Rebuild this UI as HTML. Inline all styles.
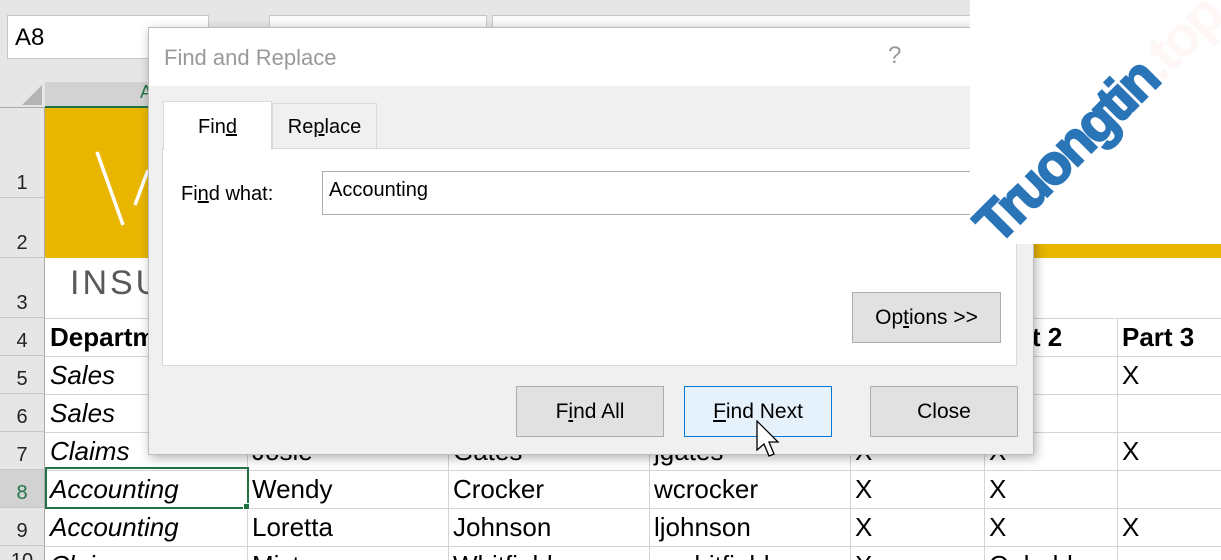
<!DOCTYPE html>
<html><head><meta charset="utf-8"><style>
*{margin:0;padding:0;box-sizing:border-box}
html,body{width:1221px;height:560px;overflow:hidden}
body{background:#fff;position:relative;font-family:"Liberation Sans",sans-serif;color:#000}
.a{position:absolute}
.rh{position:absolute;left:0;width:45px;background:#e6e6e6;border-bottom:1px solid #c6c6c6;border-right:1px solid #ababab;font-size:20px;color:#222;text-align:center}
.rh span{position:absolute;bottom:2px;left:0;right:0}
.vl{position:absolute;top:318px;bottom:0;width:1px;background:#d4d4d4}
.hl{position:absolute;left:45px;right:0;height:1px;background:#d4d4d4}
.c{position:absolute;font-size:26px;white-space:nowrap}
.i{font-style:italic}
.btn{position:absolute;top:386px;height:51px;width:148px;background:#e1e1e1;border:1px solid #adadad;font-size:21px;text-align:center;line-height:49px}
u{text-decoration:underline}
</style></head><body>
<div class="a" style="left:0;top:0;width:1221px;height:82px;background:#e6e6e6"></div>
<div class="a" style="left:7px;top:15px;width:202px;height:44px;background:#fff;border:1px solid #c6c6c6;font-size:24px;padding:8px 0 0 7px">A8</div>
<div class="a" style="left:269px;top:15px;width:218px;height:14px;background:#fafafa;border:1px solid #c6c6c6"></div>
<div class="a" style="left:492px;top:15px;width:480px;height:14px;background:#fafafa;border:1px solid #c6c6c6"></div>
<div class="a" style="left:0;top:82px;width:1221px;height:26px;background:#e6e6e6;border-bottom:1px solid #ababab"></div>
<div class="a" style="left:45px;top:82px;width:202px;height:26px;background:#d2d2d2;border-bottom:2px solid #217346;text-align:center;font-size:18px;color:#217346">A</div>
<div class="a" style="left:22px;top:85px;width:0;height:0;border-left:20px solid transparent;border-bottom:20px solid #b4b4b4"></div>
<div class="rh" style="top:108px;height:90px"><span>1</span></div>
<div class="rh" style="top:198px;height:60px"><span>2</span></div>
<div class="rh" style="top:258px;height:60px"><span>3</span></div>
<div class="rh" style="top:318px;height:38px"><span>4</span></div>
<div class="rh" style="top:356px;height:38px"><span>5</span></div>
<div class="rh" style="top:394px;height:38px"><span>6</span></div>
<div class="rh" style="top:432px;height:38px"><span>7</span></div>
<div class="rh" style="top:470px;height:38px;background:#d2d2d2;color:#217346"><span>8</span></div>
<div class="rh" style="top:508px;height:38px"><span>9</span></div>
<div class="rh" style="top:546px;height:20px"><span style="bottom:-8px">10</span></div>
<div class="a" style="left:45px;top:108px;width:1176px;height:150px;background:#e8b600"></div>
<svg class="a" style="left:90px;top:145px" width="60" height="85"><path d="M7 7 L33 80 M45 60 L58 25" stroke="#fff" stroke-width="3.5" fill="none"/></svg>
<div class="a" style="left:60px;top:264px;font-size:34px;color:#595959;letter-spacing:3px;padding-left:10px">INSURANCE</div>
<div class="hl" style="top:318px"></div><div class="hl" style="top:356px"></div><div class="hl" style="top:394px"></div><div class="hl" style="top:432px"></div><div class="hl" style="top:470px"></div><div class="hl" style="top:508px"></div><div class="hl" style="top:546px"></div>
<div class="vl" style="left:247px"></div><div class="vl" style="left:448px"></div><div class="vl" style="left:649px"></div><div class="vl" style="left:850px"></div><div class="vl" style="left:984px"></div><div class="vl" style="left:1117px"></div>
<div class="c" style="left:50px;top:322px;font-weight:bold">Department</div>
<div class="c" style="left:990px;top:322px;font-weight:bold">Part 2</div>
<div class="c" style="left:1122px;top:322px;font-weight:bold">Part 3</div>
<div class="c i" style="left:50px;top:360px">Sales</div><div class="c" style="left:1122px;top:360px">X</div>
<div class="c i" style="left:50px;top:398px">Sales</div>
<div class="c i" style="left:50px;top:436px">Claims</div><div class="c" style="left:252px;top:436px">Josie</div><div class="c" style="left:453px;top:436px">Gates</div><div class="c" style="left:654px;top:436px">jgates</div><div class="c" style="left:855px;top:436px">X</div><div class="c" style="left:989px;top:436px">X</div><div class="c" style="left:1122px;top:436px">X</div>
<div class="c i" style="left:50px;top:474px">Accounting</div><div class="c" style="left:252px;top:474px">Wendy</div><div class="c" style="left:453px;top:474px">Crocker</div><div class="c" style="left:654px;top:474px">wcrocker</div><div class="c" style="left:855px;top:474px">X</div><div class="c" style="left:989px;top:474px">X</div>
<div class="c i" style="left:50px;top:512px">Accounting</div><div class="c" style="left:252px;top:512px">Loretta</div><div class="c" style="left:453px;top:512px">Johnson</div><div class="c" style="left:654px;top:512px">ljohnson</div><div class="c" style="left:855px;top:512px">X</div><div class="c" style="left:989px;top:512px">X</div><div class="c" style="left:1122px;top:512px">X</div>
<div class="c i" style="left:50px;top:550px">Claims</div><div class="c" style="left:252px;top:550px">Misty</div><div class="c" style="left:453px;top:550px">Whitfield</div><div class="c" style="left:654px;top:550px">mwhitfield</div><div class="c" style="left:855px;top:550px">X</div><div class="c" style="left:989px;top:550px">Onhold</div>
<div class="a" style="left:45px;top:467px;width:204px;height:42px;border:2px solid #217346"></div>
<div class="a" style="left:243px;top:503px;width:7px;height:7px;background:#217346;border:1px solid #fff"></div>
<div class="a" style="left:148px;top:27px;width:886px;height:428px;background:#f0f0f0;border:1px solid #bdbdbd;box-shadow:2px 3px 10px rgba(0,0,0,.3)">
 <div class="a" style="left:0;top:0;width:884px;height:58px;background:#fff"></div>
 <div class="a" style="left:15px;top:17px;font-size:22px;color:#999">Find and Replace</div>
 <div class="a" style="left:739px;top:14px;font-size:24px;color:#999">?</div>
 <div class="a" style="left:13px;top:120px;width:855px;height:218px;background:#fff;border:1px solid #d9d9d9"></div>
 <div class="a" style="left:123px;top:75px;width:105px;height:46px;background:#f0f0f0;border:1px solid #d9d9d9;font-size:20px;text-align:center;padding-top:12px">Re<u>p</u>lace</div>
 <div class="a" style="left:14px;top:73px;width:109px;height:49px;background:#fff;border:1px solid #d9d9d9;border-bottom:none;font-size:20px;text-align:center;padding-top:14px">Fin<u>d</u></div>
 <div class="a" style="left:32px;top:155px;font-size:20px">Fi<u>n</u>d what:</div>
 <div class="a" style="left:173px;top:143px;width:700px;height:44px;background:#fff;border:1px solid #adadad;font-size:20px;padding:7px 0 0 6px">Accounting</div>
 <div class="a" style="left:703px;top:264px;width:149px;height:51px;background:#e1e1e1;border:1px solid #adadad;font-size:21px;text-align:center;line-height:49px">Op<u>t</u>ions &gt;&gt;</div>
</div>
<div class="btn" style="left:516px">F<u>i</u>nd All</div>
<div class="btn" style="left:684px;background:#e5f1fb;border-color:#0078d7"><u>F</u>ind Next</div>
<div class="btn" style="left:870px">Close</div>
<svg class="a" style="left:756px;top:420px" width="28" height="42" viewBox="0 0 28 42"><path d="M1 1 L1 30 L8 24 L13 36 L18 34 L13 22 L22 22 Z" fill="#fff" stroke="#000" stroke-width="1.3"/></svg>
<div class="a" style="left:970px;top:0;width:251px;height:244px;background:#fff;overflow:hidden">
 <div class="a" style="left:-30px;top:94px;width:300px;transform:rotate(-45deg);transform-origin:50% 50%;font-size:56px;font-weight:bold;color:#2a74b8;letter-spacing:-3px;white-space:nowrap;-webkit-text-stroke:2px #2a74b8">Truongtin<span style="color:#fff6f6;-webkit-text-stroke:0">.top</span></div>
</div>
</body></html>
